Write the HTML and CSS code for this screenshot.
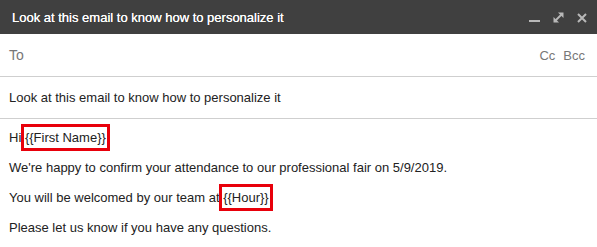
FILE: index.html
```html
<!DOCTYPE html>
<html>
<head>
<meta charset="utf-8">
<link rel="stylesheet" href="styles.css">
</head>
<body>
<div class="compose">
  <div class="header">
    <span class="title">Look at this email to know how to personalize it</span>
    <div class="controls">
      <svg class="ic" width="11" height="11" viewBox="0 0 11 11"><rect x="0" y="8" width="11" height="2" fill="#b8b8b8"/></svg>
      <svg class="ic" width="11" height="11" viewBox="0 0 11 11"><path d="M2 9 L9 2" stroke="#b8b8b8" stroke-width="1.8"/><path d="M5 0.5 H10.5 V6 Z" fill="#b8b8b8"/><path d="M0.5 5 V10.5 H6 Z" fill="#b8b8b8"/></svg>
      <svg class="ic" width="10" height="10" viewBox="0 0 10 10"><path d="M1 1 L9 9 M9 1 L1 9" stroke="#b8b8b8" stroke-width="2"/></svg>
    </div>
  </div>
  <div class="row">
    <span class="label">To</span>
    <span class="cc"><span>Cc</span><span>Bcc</span></span>
  </div>
  <div class="row subject">Look at this email to know how to personalize it</div>
  <div class="body">
    <p>Hi <span class="tag">{{First Name}}</span></p>
    <p>We're happy to confirm your attendance to our professional fair on 5/9/2019.</p>
    <p>You will be welcomed by our team at <span class="tag">{{Hour}}</span></p>
    <p>Please let us know if you have any questions.</p>
  </div>
</div>
</body>
</html>
```
FILE: styles.css
```css
* { box-sizing: border-box; }
html, body { margin: 0; padding: 0; background: #fff; }
body { font-family: "Liberation Sans", Arial, sans-serif; font-size: 13px; color: #222; }
.compose { width: 597px; }
.header {
  height: 34px;
  background: #404040;
  display: flex;
  align-items: center;
  justify-content: space-between;
  padding: 0 10px 0 12px;
}
.title { color: #fff; font-size: 13px; text-shadow: 0 0 0.4px #fff; }
.controls { display: flex; gap: 13px; align-items: center; padding-top: 1px; }
.ic { display: block; }
.row {
  height: 43px;
  border-bottom: 1px solid #cfcfcf;
  display: flex;
  align-items: center;
  justify-content: space-between;
  padding: 0 12px 0 9px;
  font-size: 14px;
}
.label { color: #777; }
.cc { color: #777; display: flex; gap: 8px; font-size: 13px; }
.subject { height: 42px; color: #222; font-size: 13px; }
.body { padding: 9px 9px 0 9px; }
.body p { margin: 0; height: 30px; line-height: 20px; }
.tag {
  border: 3px solid #e8000b;
  padding: 3px 1px;
  margin-left: -4px;
}
```
